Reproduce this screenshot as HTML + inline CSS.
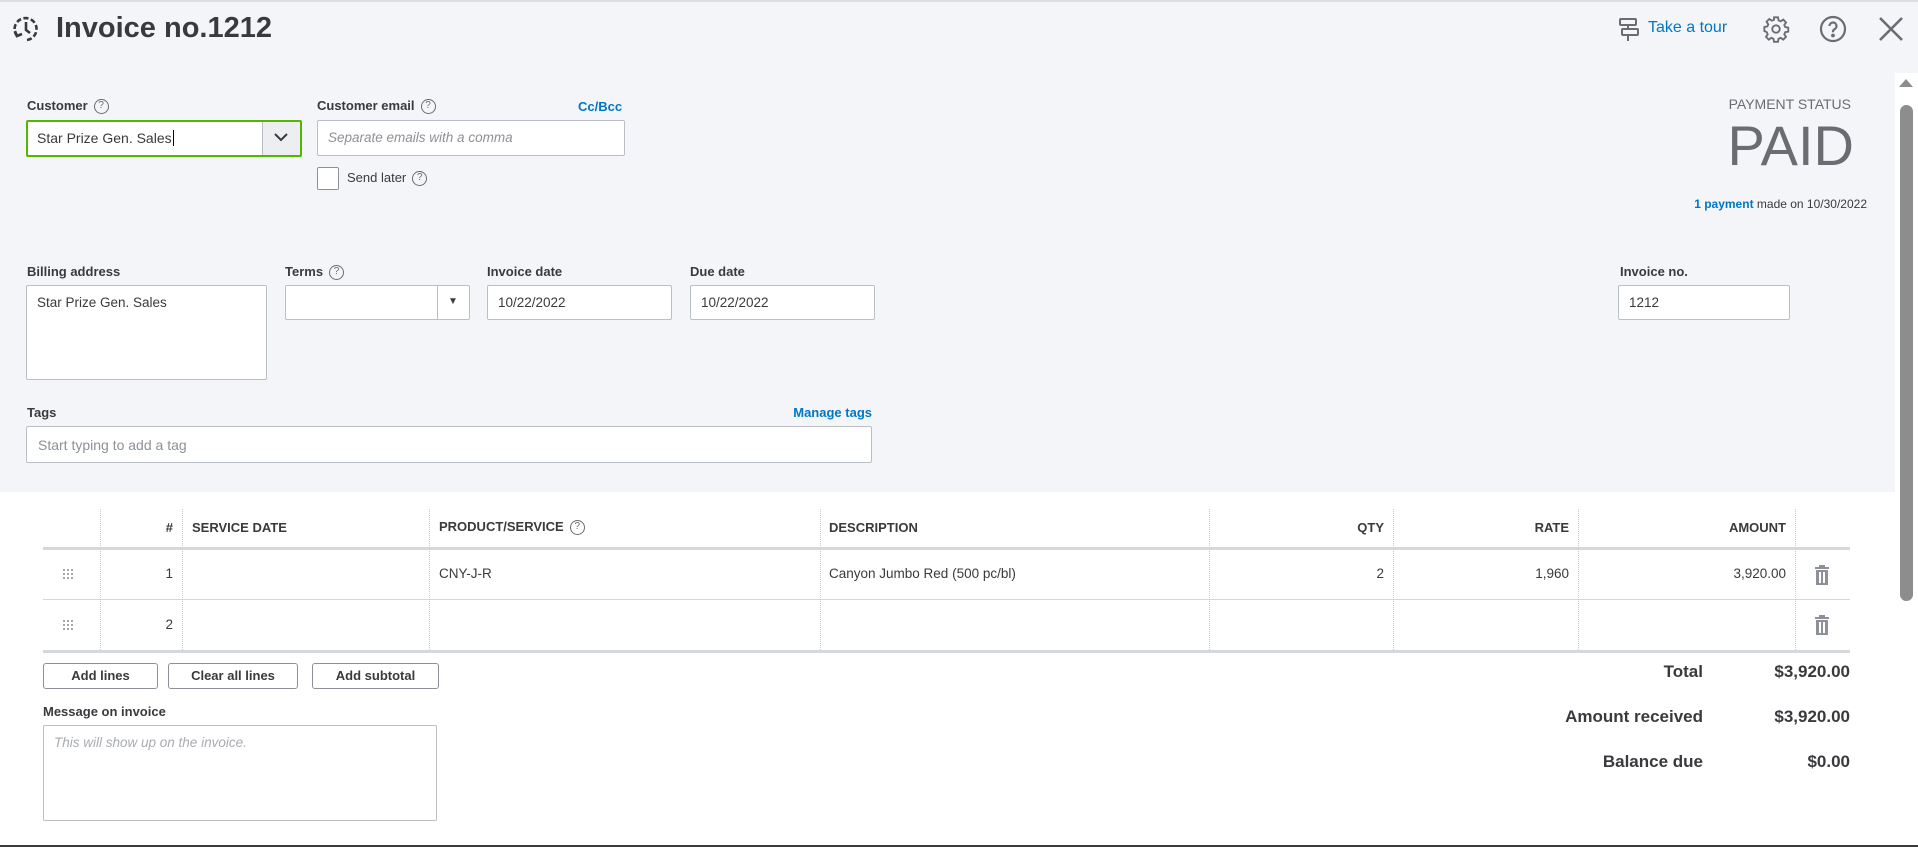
<!DOCTYPE html>
<html><head><meta charset="utf-8"><style>
*{box-sizing:border-box;margin:0;padding:0}
body{width:1918px;height:847px;overflow:hidden;background:#fff;font-family:"Liberation Sans",sans-serif;color:#393a3d;position:relative;font-size:13.5px}
.a{position:absolute}
.top{left:0;top:0;width:1918px;height:492px;background:#f4f5f8;border-top:2px solid #dcdde0}
.lbl{font-size:13px;color:#393a3d;font-weight:600}
.box{background:#fff;border:1px solid #babec5;border-radius:2px}
.q{display:inline-block;width:15px;height:15px;border:1.5px solid #6b6c72;border-radius:50%;font-size:10px;text-align:center;line-height:12px;color:#6b6c72;vertical-align:middle;margin-left:6px;font-weight:400}
.blue{color:#0077c5}
.ph{color:#8d9096;font-style:italic}
.th{font-size:13px;font-weight:700;color:#393a3d;top:520px}
.vl{width:0;border-left:1px dotted #c8cace}
.btn{border:1px solid #8d9096;border-radius:3px;background:#fff;font-size:13px;font-weight:600;text-align:center;line-height:24px;top:663px;height:26px}
.tot{font-size:17px;font-weight:700;color:#393a3d;text-align:right}
</style></head><body>
<div class="a top"></div>
<svg class="a" style="left:12px;top:14px" width="30" height="30" viewBox="0 0 30 30" fill="none" stroke="#393a3d" stroke-width="2.6"><path d="M5 22A11 11 0 1 1 15 26" stroke-dasharray="5 2.5"/><path d="M14 8v8l4 3"/><path d="M3 17l2 5 5-2"/></svg>
<div class="a" style="left:56px;top:12px;font-size:29px;font-weight:700;color:#393a3d">Invoice no.1212</div>
<svg class="a" style="left:1618px;top:17px" width="24" height="26" viewBox="0 0 24 26" fill="none" stroke="#6b6c72" stroke-width="2"><rect x="2" y="2" width="16" height="6" rx="1"/><rect x="4" y="12" width="16" height="6" rx="1"/><path d="M10 8v4M10 18v6"/></svg>
<div class="a blue" style="left:1648px;top:19px;font-size:16px">Take a tour</div>
<svg class="a" style="left:1762px;top:15px" width="28" height="28" viewBox="0 0 24 24" fill="none" stroke="#6b6c72" stroke-width="1.6"><circle cx="12" cy="12" r="3.2"/><path d="M10.3 2h3.4l.5 2.6 1.8.8 2.2-1.5 2.4 2.4-1.5 2.2.8 1.8 2.6.5v3.4l-2.6.5-.8 1.8 1.5 2.2-2.4 2.4-2.2-1.5-1.8.8-.5 2.6h-3.4l-.5-2.6-1.8-.8-2.2 1.5-2.4-2.4 1.5-2.2-.8-1.800L2 13.7v-3.4l2.6-.5.8-1.8-1.5-2.2 2.4-2.4 2.2 1.5 1.8-.8z"/></svg>
<svg class="a" style="left:1819px;top:15px" width="28" height="28" viewBox="0 0 28 28" fill="none" stroke="#6b6c72" stroke-width="2.2"><circle cx="14" cy="14" r="12"/><path d="M10.5 11a3.5 3.5 0 1 1 5 3.2c-1 .5-1.5 1.2-1.5 2.3v.8"/><circle cx="14" cy="20.5" r=".8" fill="#6b6c72"/></svg>
<svg class="a" style="left:1878px;top:16px" width="26" height="26" viewBox="0 0 26 26" stroke="#6b6c72" stroke-width="2.6"><path d="M2 2l22 22M24 2L2 24"/></svg>

<div class="a lbl" style="left:27px;top:98px">Customer<span class="q">?</span></div>
<div class="a box" style="left:26px;top:120px;width:276px;height:37px;border:2px solid #53b700;padding:8px 9px;font-size:14px">Star Prize Gen. Sales<span style="border-left:1.5px solid #000;margin-left:1px"></span></div>
<div class="a" style="left:262px;top:122px;width:38px;height:33px;background:#eceef1;border-left:1px solid #babec5"></div>
<svg class="a" style="left:273px;top:131px" width="16" height="12" viewBox="0 0 16 12" fill="none" stroke="#393a3d" stroke-width="2"><path d="M2 3l6 6 6-6"/></svg>
<div class="a lbl" style="left:317px;top:98px">Customer email<span class="q">?</span></div>
<div class="a blue" style="left:578px;top:99px;font-size:13px;font-weight:600">Cc/Bcc</div>
<div class="a box" style="left:317px;top:120px;width:308px;height:36px;padding:9px 10px;font-size:13.5px"><span class="ph">Separate emails with a comma</span></div>
<div class="a box" style="left:317px;top:167px;width:22px;height:23px;border-color:#8d9096"></div>
<div class="a" style="left:347px;top:170px;font-size:13px">Send later<span class="q">?</span></div>

<div class="a" style="left:1700px;top:96px;width:151px;text-align:right;font-size:14px;color:#6b6c72">PAYMENT STATUS</div>
<div class="a" style="left:1600px;top:113px;width:254px;text-align:right;font-size:56px;color:#6b6c72;font-weight:300">PAID</div>
<div class="a" style="left:1600px;top:197px;width:267px;text-align:right;font-size:12px"><b class="blue">1 payment</b> made on 10/30/2022</div>

<div class="a lbl" style="left:27px;top:264px">Billing address</div>
<div class="a box" style="left:26px;top:285px;width:241px;height:95px;padding:9px 10px">Star Prize Gen. Sales</div>
<div class="a lbl" style="left:285px;top:264px">Terms<span class="q">?</span></div>
<div class="a box" style="left:285px;top:285px;width:185px;height:35px"></div>
<div class="a" style="left:437px;top:286px;height:33px;border-left:1px solid #babec5;width:1px"></div>
<div class="a" style="left:448px;top:296px;font-size:10px">▼</div>
<div class="a lbl" style="left:487px;top:264px">Invoice date</div>
<div class="a box" style="left:487px;top:285px;width:185px;height:35px;padding:9px 10px">10/22/2022</div>
<div class="a lbl" style="left:690px;top:264px">Due date</div>
<div class="a box" style="left:690px;top:285px;width:185px;height:35px;padding:9px 10px">10/22/2022</div>
<div class="a lbl" style="left:1620px;top:264px">Invoice no.</div>
<div class="a box" style="left:1618px;top:285px;width:172px;height:35px;padding:9px 10px">1212</div>

<div class="a lbl" style="left:27px;top:405px">Tags</div>
<div class="a blue" style="left:750px;top:405px;width:122px;text-align:right;font-size:13px;font-weight:600">Manage tags</div>
<div class="a box" style="left:26px;top:426px;width:846px;height:37px;padding:10px 11px;color:#8d9096;font-size:14px">Start typing to add a tag</div>

<div class="a" style="left:43px;top:547px;width:1807px;height:3px;background:#d4d7dc"></div>
<div class="a" style="left:43px;top:599px;width:1807px;height:1px;background:#d4d7dc"></div>
<div class="a" style="left:43px;top:650px;width:1807px;height:3px;background:#d4d7dc"></div>
<div class="a vl" style="left:100px;top:509px;height:141px"></div>
<div class="a vl" style="left:182px;top:509px;height:141px"></div>
<div class="a vl" style="left:429px;top:509px;height:141px"></div>
<div class="a vl" style="left:820px;top:509px;height:141px"></div>
<div class="a vl" style="left:1209px;top:509px;height:141px"></div>
<div class="a vl" style="left:1393px;top:509px;height:141px"></div>
<div class="a vl" style="left:1578px;top:509px;height:141px"></div>
<div class="a vl" style="left:1795px;top:509px;height:141px"></div>
<div class="a th" style="left:150px;width:23px;text-align:right">#</div>
<div class="a th" style="left:192px">SERVICE DATE</div>
<div class="a th" style="left:439px;top:519px">PRODUCT/SERVICE<span class="q">?</span></div>
<div class="a th" style="left:829px">DESCRIPTION</div>
<div class="a th" style="left:1209px;width:175px;text-align:right">QTY</div>
<div class="a th" style="left:1393px;width:176px;text-align:right">RATE</div>
<div class="a th" style="left:1578px;width:208px;text-align:right">AMOUNT</div>

<div class="a" style="left:62px;top:568px;width:12px;height:12px;background:radial-gradient(circle,#8d9096 0.9px,transparent 1.1px) 0 0/4px 4px"></div>
<div class="a" style="left:62px;top:619px;width:12px;height:12px;background:radial-gradient(circle,#8d9096 0.9px,transparent 1.1px) 0 0/4px 4px"></div>
<div class="a" style="left:150px;top:566px;width:23px;text-align:right">1</div>
<div class="a" style="left:150px;top:617px;width:23px;text-align:right">2</div>
<div class="a" style="left:439px;top:566px">CNY-J-R</div>
<div class="a" style="left:829px;top:566px">Canyon Jumbo Red (500 pc/bl)</div>
<div class="a" style="left:1209px;top:566px;width:175px;text-align:right">2</div>
<div class="a" style="left:1393px;top:566px;width:176px;text-align:right">1,960</div>
<div class="a" style="left:1578px;top:566px;width:208px;text-align:right">3,920.00</div>
<svg class="a" style="left:1814px;top:565px" width="16" height="20" viewBox="0 0 16 20" fill="#8d9096"><rect x="5" y="0" width="6" height="2"/><rect x="1" y="2" width="14" height="2"/><path d="M2 5h12v15H2z M5 7v11h2V7z M9 7v11h2V7z" fill-rule="evenodd"/></svg>
<svg class="a" style="left:1814px;top:615px" width="16" height="20" viewBox="0 0 16 20" fill="#8d9096"><rect x="5" y="0" width="6" height="2"/><rect x="1" y="2" width="14" height="2"/><path d="M2 5h12v15H2z M5 7v11h2V7z M9 7v11h2V7z" fill-rule="evenodd"/></svg>

<div class="a btn" style="left:43px;width:115px">Add lines</div>
<div class="a btn" style="left:168px;width:130px">Clear all lines</div>
<div class="a btn" style="left:312px;width:127px">Add subtotal</div>
<div class="a lbl" style="left:43px;top:704px">Message on invoice</div>
<div class="a box" style="left:43px;top:725px;width:394px;height:96px;padding:9px 10px"><span class="ph" style="color:#a8abb0">This will show up on the invoice.</span></div>

<div class="a tot" style="left:1500px;top:662px;width:203px">Total</div>
<div class="a tot" style="left:1700px;top:662px;width:150px">$3,920.00</div>
<div class="a tot" style="left:1500px;top:707px;width:203px">Amount received</div>
<div class="a tot" style="left:1700px;top:707px;width:150px">$3,920.00</div>
<div class="a tot" style="left:1500px;top:752px;width:203px">Balance due</div>
<div class="a tot" style="left:1700px;top:752px;width:150px">$0.00</div>

<div class="a" style="left:1895px;top:73px;width:23px;height:772px;background:#fff"></div>
<div class="a" style="left:1899px;top:79px;width:0;height:0;border-left:7px solid transparent;border-right:7px solid transparent;border-bottom:8px solid #8d8d8d"></div>
<div class="a" style="left:1900px;top:105px;width:13px;height:496px;background:#8d8d8d;border-radius:7px"></div>
<div class="a" style="left:0;top:845px;width:1918px;height:2px;background:#3a3b3f"></div>
</body></html>
